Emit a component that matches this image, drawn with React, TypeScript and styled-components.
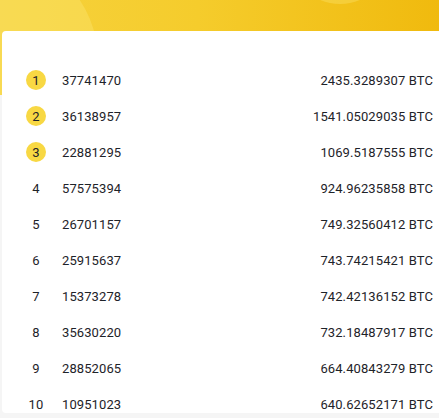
import React from "react";
import styled, { createGlobalStyle } from "styled-components";

const Global = createGlobalStyle`
  html, body { margin: 0; padding: 0; background: #f5f5f5; }
  body { font-family: Roboto, "Noto Sans", sans-serif; }
`;

const Page = styled.div`
  width: 439px;
  height: 418px;
  overflow: hidden;
  background: #f5f5f5;
`;

const Banner = styled.div`
  position: relative;
  height: 95px;
  overflow: hidden;
  background: linear-gradient(90deg, #f6d23d 0%, #f5cc2c 45%, #f0ba0e 100%);
`;

const Bubble = styled.div<{ $x: number; $y: number; $r: number; $a: number }>`
  position: absolute;
  left: ${(p) => p.$x - p.$r}px;
  top: ${(p) => p.$y - p.$r}px;
  width: ${(p) => p.$r * 2}px;
  height: ${(p) => p.$r * 2}px;
  border-radius: 50%;
  background: rgba(255, 240, 140, ${(p) => p.$a});
`;

const Card = styled.div`
  position: relative;
  margin: -64px 0 0 2px;
  height: 382px;
  overflow: hidden;
  background: #ffffff;
  border-radius: 4px 0 0 4px;
  padding: 31px 6px 0 24px;
  box-sizing: border-box;
`;

const List = styled.div`
  display: flex;
  flex-direction: column;
`;

const Row = styled.div`
  display: flex;
  align-items: center;
  height: 36px;
  font-size: 13px;
  color: #1e2329;
  letter-spacing: 0.1px;
`;

const Rank = styled.div<{ $top: boolean }>`
  width: 20px;
  height: 20px;
  flex: none;
  display: flex;
  align-items: center;
  justify-content: center;
  border-radius: 50%;
  background: ${(p) => (p.$top ? "#f8d843" : "transparent")};
  color: #1e2329;
  font-size: 13px;
`;

const Id = styled.div`
  margin-left: 16px;
  flex: 1;
`;

const Amount = styled.div`
  text-align: right;
  white-space: nowrap;
`;

const rows: [string, string][] = [
  ["37741470", "2435.3289307"],
  ["36138957", "1541.05029035"],
  ["22881295", "1069.5187555"],
  ["57575394", "924.96235858"],
  ["26701157", "749.32560412"],
  ["25915637", "743.74215421"],
  ["15373278", "742.42136152"],
  ["35630220", "732.18487917"],
  ["28852065", "664.40843279"],
  ["10951023", "640.62652171"],
];

export default function App() {
  return (
    <Page>
      <Global />
      <Banner>
        <Bubble $x={-10} $y={60} $r={108} $a={0.28} />
        <Bubble $x={340} $y={-48} $r={52} $a={0.28} />
      </Banner>
      <Card>
        <List>
          {rows.map(([id, amt], i) => (
            <Row key={id}>
              <Rank $top={i < 3}>{i + 1}</Rank>
              <Id>{id}</Id>
              <Amount>{amt} BTC</Amount>
            </Row>
          ))}
        </List>
      </Card>
    </Page>
  );
}
